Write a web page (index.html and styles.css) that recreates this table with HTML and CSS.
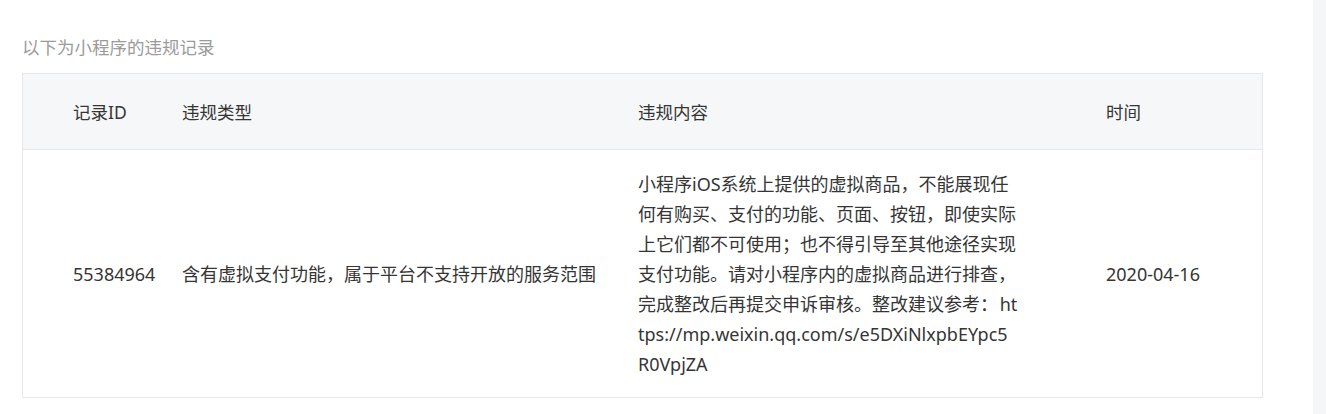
FILE: index.html
```html
<!DOCTYPE html>
<html lang="zh-CN">
<head>
<meta charset="utf-8">
<title>违规记录</title>
<link rel="stylesheet" href="styles.css">
</head>
<body>
<div class="page">
  <main class="content">
    <p class="title">以下为小程序的违规记录</p>
    <table class="records">
      <colgroup>
        <col class="col-id">
        <col class="col-type">
        <col class="col-detail">
        <col class="col-time">
      </colgroup>
      <thead>
        <tr>
          <th class="cell-id">记录ID</th>
          <th>违规类型</th>
          <th>违规内容</th>
          <th>时间</th>
        </tr>
      </thead>
      <tbody>
        <tr>
          <td class="cell-id">55384964</td>
          <td class="cell-type">含有虚拟支付功能，属于平台不支持开放的服务范围</td>
          <td class="cell-detail">小程序iOS系统上提供的虚拟商品，不能展现任何有购买、支付的功能、页面、按钮，即使实际上它们都不可使用；也不得引导至其他途径实现支付功能。请对小程序内的虚拟商品进行排查，完成整改后再提交申诉审核。整改建议参考： https://mp.weixin.qq.com/s/e5DXiNlxpbEYpc5R0VpjZA</td>
          <td>2020-04-16</td>
        </tr>
      </tbody>
    </table>
  </main>
  <aside class="side"></aside>
</div>
</body>
</html>
```
FILE: styles.css
```css
html, body {
  margin: 0;
  padding: 0;
  background: #ffffff;
}

body {
  font-family: "Noto Sans", "Noto Sans CJK SC", sans-serif;
  color: #353535;
}

.page {
  display: flex;
  width: 1326px;
  height: 414px;
  overflow: hidden;
}

.content {
  flex: 1;
  padding: 35px 0 0 22px;
}

.side {
  width: 13px;
  background: #f5f6f8;
}

.title {
  margin: 0 0 14px;
  font-size: 17.5px;
  line-height: 24px;
  color: #9b9b9b;
}

.records {
  width: 1241px;
  table-layout: fixed;
  border-collapse: separate;
  border-spacing: 0;
  border: 1px solid #e7e7eb;
}

.col-id { width: 159px; }
.col-type { width: 456px; }
.col-detail { width: 468px; }
.col-time { width: 156px; }

.records th {
  height: 75px;
  padding: 0;
  background: #f6f7f9;
  border-bottom: 1px solid #e7e7eb;
  font-size: 17.5px;
  font-weight: normal;
  text-align: left;
  color: #353535;
  vertical-align: middle;
}

.records td {
  height: 247px;
  padding: 0;
  font-size: 18px;
  line-height: 30px;
  vertical-align: middle;
  color: #353535;
}

.records .cell-id {
  padding-left: 50px;
}

.cell-type {
  color: #5c6b82;
}

.records .cell-detail {
  padding-right: 88px;
  word-break: break-all;
  word-spacing: -3px;
}
```
